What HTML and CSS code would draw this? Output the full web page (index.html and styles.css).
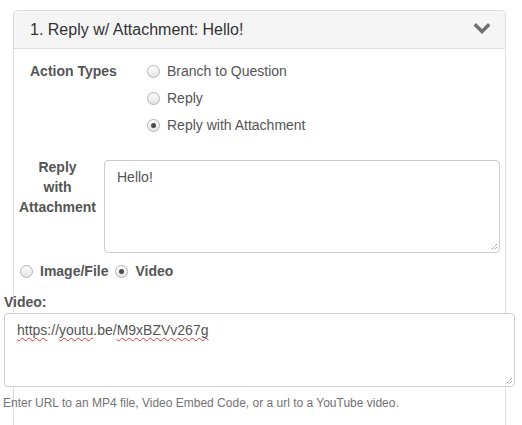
FILE: index.html
```html
<!DOCTYPE html>
<html>
<head>
<meta charset="utf-8">
<link rel="stylesheet" href="styles.css">
</head>
<body>
<div class="wrap">
  <div class="panel">
    <div class="panel-heading">
      <h4 class="panel-title">1. Reply w/ Attachment: Hello!</h4>
      <svg class="chevron" width="16" height="11" viewBox="0 0 16 11"><polyline points="2,2.5 8,8.5 14,2.5" fill="none" stroke="#707070" stroke-width="3.4" stroke-linecap="square"/></svg>
    </div>
    <div class="panel-body">
      <div class="action-row">
        <div class="action-label">Action Types</div>
        <div class="radio-list">
          <label class="radio"><span class="rdo"></span>Branch to Question</label>
          <label class="radio"><span class="rdo"></span>Reply</label>
          <label class="radio"><span class="rdo checked"></span>Reply with Attachment</label>
        </div>
      </div>
      <div class="reply-row">
        <div class="reply-label">Reply<br>with<br>Attachment</div>
        <div class="textbox reply-box">Hello!<svg class="grip" width="8" height="8" viewBox="0 0 8 8"><path d="M7 1 L1 7 M7 4 L4 7" stroke="#777" stroke-width="1" stroke-dasharray="1 1"/></svg></div>
      </div>
      <div class="type-row">
        <label class="radio bold"><span class="rdo"></span>Image/File</label>
        <label class="radio bold"><span class="rdo checked"></span>Video</label>
      </div>
      <div class="video-section">
        <div class="video-label">Video:</div>
        <div class="textbox video-box"><span class="sp">https</span>://<span class="sp">youtu</span>.be/<span class="sp">M9xBZVv267g</span><svg class="grip" width="8" height="8" viewBox="0 0 8 8"><path d="M7 1 L1 7 M7 4 L4 7" stroke="#777" stroke-width="1" stroke-dasharray="1 1"/></svg></div>
        <p class="help">Enter URL to an MP4 file, Video Embed Code, or a url to a YouTube video.</p>
      </div>
    </div>
  </div>
</div>
</body>
</html>
```

FILE: styles.css
```css
* { box-sizing: border-box; }
html, body { margin: 0; padding: 0; background: #fff; overflow: hidden; }
body {
  font-family: "Liberation Sans", Arial, sans-serif;
  font-size: 14px;
  line-height: 20px;
  color: #555;
}
.wrap { padding: 10px 16px 0 13px; height: 425px; }
.panel {
  border: 1px solid #ddd;
  border-radius: 4px;
  height: 460px;
  background: #fff;
}
.panel-heading {
  background: #f5f5f5;
  border-bottom: 1px solid #ddd;
  border-radius: 3px 3px 0 0;
  height: 38px;
  padding: 0 15px 0 16px;
  display: flex;
  align-items: center;
  justify-content: space-between;
}
.panel-title {
  margin: 0;
  font-size: 16px;
  font-weight: normal;
  color: #333;
  line-height: 18px;
  padding-top: 1px;
}
.chevron { display: block; margin-top: -2px; }
.panel-body { padding: 12px 5px 0 0; }
.action-row { display: flex; padding-left: 16px; }
.action-label {
  width: 117px;
  font-weight: bold;
  color: #555;
}
.radio-list { display: flex; flex-direction: column; gap: 7px; }
.radio { display: flex; align-items: center; color: #555; }
.radio.bold { font-weight: bold; }
.rdo {
  width: 13px; height: 13px;
  border-radius: 50%;
  border: 1px solid #b4b4b4;
  background: linear-gradient(#fdfdfd, #e4e4e4);
  margin-right: 7px;
  flex: none;
  display: flex;
  align-items: center;
  justify-content: center;
}
.rdo.checked::after {
  content: "";
  width: 5px; height: 5px;
  border-radius: 50%;
  background: #4a4a4a;
}
.reply-row {
  display: flex;
  gap: 4px;
  margin-top: 25px;
  padding-left: 1px;
}
.reply-label {
  width: 85px;
  text-align: center;
  font-weight: bold;
  color: #555;
  margin-top: -3px;
}
.textbox {
  position: relative;
  border: 1px solid #ccc;
  border-radius: 4px;
  padding: 6px 12px;
  color: #555;
  background: #fff;
}
.reply-box { flex: 1; height: 93px; }
.grip { position: absolute; right: 1px; bottom: 1px; }
.type-row {
  display: flex;
  gap: 7px;
  margin-top: 8px;
  padding-left: 6px;
}
.type-row .rdo { margin-right: 7px; }
.video-section { margin: 11px -15px 0 -10px; }
.video-label { font-weight: bold; color: #555; margin-bottom: 1px; }
.video-box { height: 74px; }
.sp { text-decoration: underline wavy #e0393e; text-decoration-thickness: 1px; text-underline-offset: 2px; text-decoration-skip-ink: none; }
.help {
  margin: 8px 0 0 -1px;
  font-size: 12px;
  line-height: 17px;
  color: #737373;
}
```
